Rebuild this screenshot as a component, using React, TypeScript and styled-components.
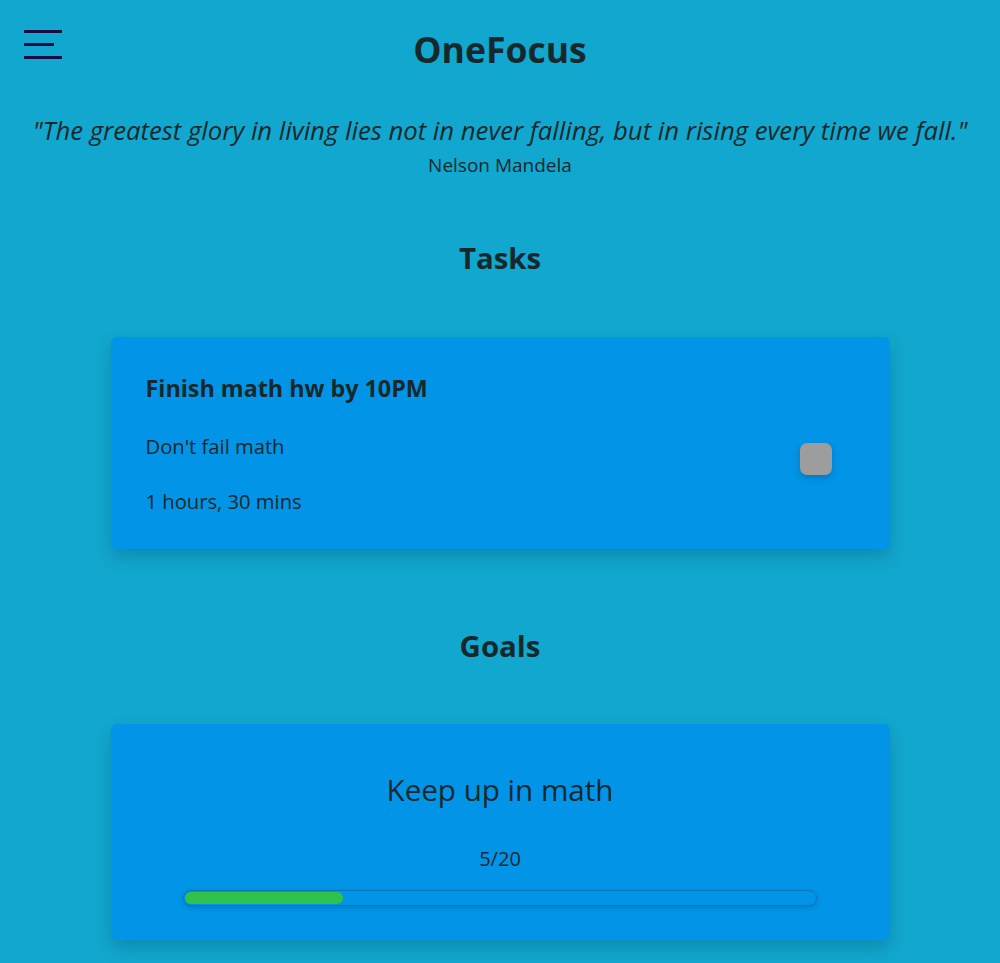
import React from "react";
import styled, { createGlobalStyle } from "styled-components";

const Global = createGlobalStyle`
  html, body { margin: 0; padding: 0; }
  body {
    background: #12a7ce;
    font-family: "Open Sans", "Noto Sans", sans-serif;
    color: #15292c;
  }
`;

const Page = styled.div`
  display: flex;
  flex-direction: column;
  align-items: center;
  min-height: 963px;
  padding-bottom: 40px;
`;

const Header = styled.header`
  position: relative;
  width: 100%;
  display: flex;
  justify-content: center;
  padding-top: 26px;
`;

const Menu = styled.button`
  position: absolute;
  left: 24px;
  top: 30px;
  width: 40px;
  height: 30px;
  padding: 0;
  border: 0;
  background: transparent;
  display: flex;
  flex-direction: column;
  gap: 10px;
  cursor: pointer;
`;

const Bar = styled.span<{ $w: number }>`
  display: block;
  width: ${(p) => p.$w}px;
  height: 3px;
  background: #170d45;
`;

const Title = styled.h1`
  margin: 0;
  font-size: 35.5px;
  font-weight: 700;
  line-height: 46px;
`;

const Quote = styled.p`
  margin: 43px 0 0;
  font-style: italic;
  font-size: 25.7px;
  line-height: 32px;
  text-align: center;
`;

const Author = styled.p`
  margin: 6px 0 0;
  font-size: 19px;
  line-height: 24px;
`;

const Section = styled.h2<{ $top: number }>`
  margin: ${(p) => p.$top}px 0 0;
  font-size: 29.4px;
  font-weight: 700;
  line-height: 40px;
`;

const Card = styled.div<{ $top: number }>`
  width: 779px;
  box-sizing: border-box;
  margin-top: ${(p) => p.$top}px;
  background: #0294e6;
  border-radius: 6px;
  box-shadow: 0 8px 16px rgba(0, 60, 90, 0.25);
`;

const TaskCard = styled(Card)`
  height: 212px;
  padding: 36px 58px 0 35px;
  display: flex;
  justify-content: space-between;
  align-items: center;
`;

const TaskInfo = styled.div`
  display: flex;
  flex-direction: column;
  align-self: flex-start;
`;

const TaskTitle = styled.div`
  font-size: 23.3px;
  font-weight: 700;
  line-height: 30px;
`;

const TaskLine = styled.div<{ $top: number }>`
  margin-top: ${(p) => p.$top}px;
  font-size: 20.2px;
  line-height: 30px;
`;

const Check = styled.div`
  width: 32px;
  height: 32px;
  border-radius: 7px;
  background: #9d9d9d;
  box-shadow: 0 3px 6px rgba(0, 40, 80, 0.25);
  margin-top: -4px;
`;

const GoalCard = styled(Card)`
  height: 216px;
  padding-top: 46px;
  display: flex;
  flex-direction: column;
  align-items: center;
`;

const GoalTitle = styled.div`
  font-size: 29.6px;
  line-height: 40px;
`;

const GoalCount = styled.div`
  margin-top: 36px;
  font-size: 20px;
  line-height: 26px;
`;

const Track = styled.div`
  margin-top: 18px;
  width: 634px;
  height: 16px;
  box-sizing: border-box;
  border: 1px solid #0677b8;
  border-radius: 8px;
  padding: 1px;
  box-shadow: 0 2px 4px rgba(0, 40, 80, 0.2);
`;

const Fill = styled.div`
  height: 12px;
  border-radius: 6px;
  background: #2fc34b;
`;

export default function App() {
  const done = 5;
  const total = 20;
  return (
    <>
      <Global />
      <Page>
        <Header>
          <Menu aria-label="menu">
            <Bar $w={38} />
            <Bar $w={30} />
            <Bar $w={38} />
          </Menu>
          <Title>OneFocus</Title>
        </Header>
        <Quote>
          "The greatest glory in living lies not in never falling, but in rising every time we fall."
        </Quote>
        <Author>Nelson Mandela</Author>
        <Section $top={61}>Tasks</Section>
        <TaskCard $top={59}>
          <TaskInfo>
            <TaskTitle>Finish math hw by 10PM</TaskTitle>
            <TaskLine $top={28}>Don't fail math</TaskLine>
            <TaskLine $top={25}>1 hours, 30 mins</TaskLine>
          </TaskInfo>
          <Check />
        </TaskCard>
        <Section $top={77}>Goals</Section>
        <GoalCard $top={58}>
          <GoalTitle>Keep up in math</GoalTitle>
          <GoalCount>
            {done}/{total}
          </GoalCount>
          <Track>
            <Fill style={{ width: `${(done / total) * 100}%` }} />
          </Track>
        </GoalCard>
      </Page>
    </>
  );
}
